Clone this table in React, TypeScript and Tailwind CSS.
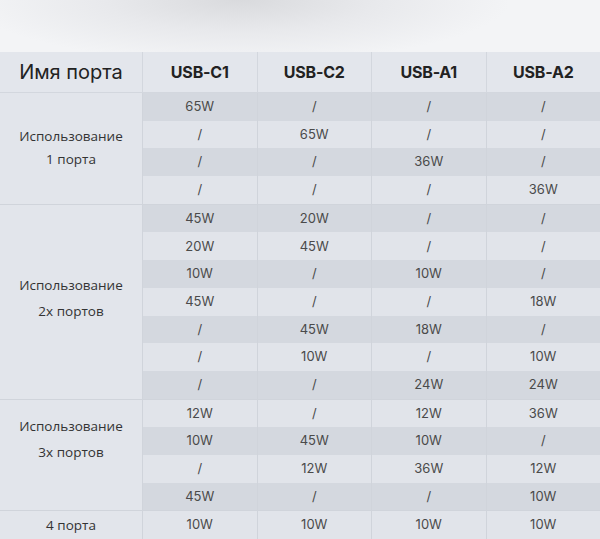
import React from 'react';

type Section = {
  label: string[];
  rows: string[][];
  labelClass: string;
};

const sections: Section[] = [
  {
    label: ['Использование', '1 порта'],
    labelClass: 'leading-[23px]',
    rows: [
      ['65W', '/', '/', '/'],
      ['/', '65W', '/', '/'],
      ['/', '/', '36W', '/'],
      ['/', '/', '/', '36W'],
    ],
  },
  {
    label: ['Использование', '2x портов'],
    labelClass: 'leading-[26px] pb-[8px]',
    rows: [
      ['45W', '20W', '/', '/'],
      ['20W', '45W', '/', '/'],
      ['10W', '/', '10W', '/'],
      ['45W', '/', '/', '18W'],
      ['/', '45W', '18W', '/'],
      ['/', '10W', '/', '10W'],
      ['/', '/', '24W', '24W'],
    ],
  },
  {
    label: ['Использование', '3x портов'],
    labelClass: 'leading-[26px] pb-[32px]',
    rows: [
      ['12W', '/', '12W', '36W'],
      ['10W', '45W', '10W', '/'],
      ['/', '12W', '36W', '12W'],
      ['45W', '/', '/', '10W'],
    ],
  },
  {
    label: ['4 порта'],
    labelClass: 'leading-[26px]',
    rows: [['10W', '10W', '10W', '10W']],
  },
];

const ports = ['USB-C1', 'USB-C2', 'USB-A1', 'USB-A2'];

export default function App() {
  let rowIndex = 0;

  return (
    <div className="w-[600px] h-[539px] overflow-hidden bg-[#e1e4ea]">
      {/* Top backdrop */}
      <div className="h-[52px] bg-[radial-gradient(ellipse_45%_120%_at_40%_0%,#d9dadd_0%,#e8e9ec_50%,#f3f4f6_100%)]" />

      {/* Header */}
      <div className="grid grid-cols-[142px_repeat(4,1fr)] h-[41px] bg-[#e3e6ec] border-b border-[#d3d7de]">
        <div className="flex items-center justify-center text-[20px] text-[#222] font-['Inter',sans-serif]">
          Имя порта
        </div>
        {ports.map(p => (
          <div
            key={p}
            className="flex items-center justify-center border-l border-[#d3d7de] text-[16px] font-bold tracking-[-0.2px] text-[#222] font-['Inter',sans-serif]"
          >
            {p}
          </div>
        ))}
      </div>

      {/* Body */}
      {sections.map((s, si) => (
        <div key={si} className="flex border-b border-[#d0d4db]">
          <div
            className={`w-[142px] shrink-0 flex flex-col items-center justify-center text-[13.5px] text-[#333] font-['Open_Sans',sans-serif] bg-[#e2e5eb] ${s.labelClass}`}
          >
            {s.label.map(l => (
              <span key={l}>{l}</span>
            ))}
          </div>
          <div className="flex-1">
            {s.rows.map((r, ri) => {
              const dark = rowIndex % 2 === 0;
              rowIndex++;
              return (
                <div
                  key={ri}
                  className={`grid grid-cols-4 h-[27.7px] ${dark ? 'bg-[#d4d8df]' : 'bg-[#e1e4ea]'}`}
                >
                  {r.map((v, ci) => (
                    <div
                      key={ci}
                      className="flex items-center justify-center border-l border-[#d0d4db] text-[13px] text-[#4a4a4a] font-['Inter',sans-serif]"
                    >
                      {v}
                    </div>
                  ))}
                </div>
              );
            })}
          </div>
        </div>
      ))}
    </div>
  );
}
